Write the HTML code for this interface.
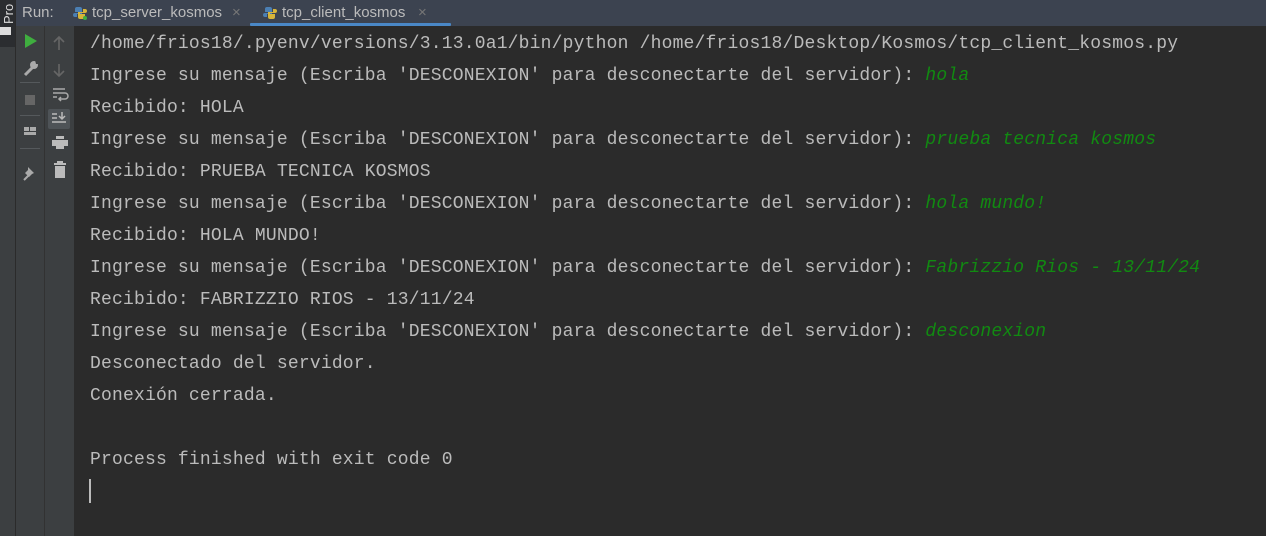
<!DOCTYPE html>
<html><head><meta charset="utf-8"><style>
*{margin:0;padding:0;box-sizing:border-box}
body{width:1266px;height:536px;background:#2b2b2b;position:relative;overflow:hidden;font-family:"Liberation Sans",sans-serif}
.abs{position:absolute}
#strip{left:0;top:0;width:15px;height:536px;background:#3c3f41}
#striptop{left:0;top:0;width:15px;height:47px;background:#2b2d30}
#tabs{left:16px;top:0;width:1250px;height:26px;background:#3c4350;color:#bbbbbb;font-size:15px}
#c1{left:16px;top:26px;width:28px;height:510px;background:#3c3f41}
#c2{left:45px;top:26px;width:29px;height:510px;background:#3c3f41}
#sep{left:44px;top:26px;width:1px;height:510px;background:#323232}
#con{left:90px;top:28px;font-family:"Liberation Mono",monospace;font-size:18px;letter-spacing:0.19px;line-height:32px;color:#bbbbbb;white-space:pre}
.g{color:#118a11;font-style:italic}
</style></head><body>
<div class="abs" id="strip"></div>
<div class="abs" id="striptop"></div>
<div class="abs" style="left:0;top:0;width:15px;height:24px;color:#ddd;font-size:13px;overflow:hidden"><div style="transform:rotate(-90deg);transform-origin:0 0;position:absolute;left:1px;top:24px;">Pro</div></div>
<div class="abs" style="left:0;top:27px;width:11px;height:8px;background:#ddd"></div>
<div class="abs" id="tabs">
<span class="abs" style="left:6px;top:4px">Run:</span>
<svg class="abs" style="left:57px;top:6px" width="14" height="14"><path d="M7 1h-3a2 2 0 0 0-2 2v3h5v1H2a2 2 0 0 0 0 4h2V8h5V3a2 2 0 0 0-2-2z" fill="#4b7fb3"/><path d="M7 13h3a2 2 0 0 0 2-2V8H7V7h5a2 2 0 0 0 0-4h-2v3H5v5a2 2 0 0 0 2 2z" fill="#d6b43a"/><circle cx="12" cy="12" r="2" fill="#3fae3f"/></svg>
<span class="abs" style="left:76px;top:4px">tcp_server_kosmos</span>
<span class="abs" style="left:216px;top:4px;color:#777">×</span>
<svg class="abs" style="left:247px;top:6px" width="14" height="14"><path d="M7 1h-3a2 2 0 0 0-2 2v3h5v1H2a2 2 0 0 0 0 4h2V8h5V3a2 2 0 0 0-2-2z" fill="#4b7fb3"/><path d="M7 13h3a2 2 0 0 0 2-2V8H7V7h5a2 2 0 0 0 0-4h-2v3H5v5a2 2 0 0 0 2 2z" fill="#d6b43a"/></svg>
<span class="abs" style="left:266px;top:4px">tcp_client_kosmos</span>
<span class="abs" style="left:402px;top:4px;color:#777">×</span>
<div class="abs" style="left:234px;top:23px;width:201px;height:3px;background:#4a88c7;border-radius:1px"></div>
</div>
<div class="abs" id="c1"></div><div class="abs" id="sep"></div><div class="abs" id="c2"></div>
<svg class="abs" style="left:16px;top:26px" width="58" height="200">
<path d="M9 8l12 7-12 7z" fill="#3fae3f"/>
<path d="M9 49l8-8" stroke="#aaa" stroke-width="3" fill="none"/>
<circle cx="18" cy="39" r="4" fill="#aaa"/><path d="M19 34l4 4-3 0z" fill="#3c3f41"/>
<rect x="4" y="56" width="20" height="1" fill="#55595c"/>
<rect x="9" y="69" width="10" height="10" fill="#666"/>
<rect x="4" y="89" width="20" height="1" fill="#55595c"/>
<rect x="8" y="101" width="5" height="4" fill="#aaa"/><rect x="14" y="101" width="6" height="4" fill="#aaa"/><rect x="8" y="106" width="12" height="3" fill="#aaa"/>
<rect x="4" y="122" width="20" height="1" fill="#55595c"/>
<path d="M8 154l5-5" stroke="#aaa" stroke-width="2"/><path d="M12 141l6 6-2 1-3 3-4-4 3-3z" fill="#aaa"/>
<path d="M43 24v-12M38 16l5-5 5 5" stroke="#666" stroke-width="1.6" fill="none"/>
<path d="M43 38v12M38 45l5 5 5-5" stroke="#666" stroke-width="1.6" fill="none"/>
<path d="M37 63h12M37 67h12a3 3 0 0 1 0 6h-5M45 71l-2 2 2 2M37 71h4" stroke="#aaa" stroke-width="1.5" fill="none"/>
<rect x="32" y="83" width="22" height="20" rx="2" fill="#4e5357"/>
<path d="M36 88h5M36 92h5M36 96h14M46 86v7M43 90l3 3 3-3" stroke="#bbb" stroke-width="1.5" fill="none"/>
<rect x="40" y="110" width="8" height="3" fill="#bbb"/><rect x="36" y="114" width="16" height="6" fill="#bbb"/><rect x="40" y="119" width="8" height="4" fill="#bbb"/>
<rect x="38" y="137" width="12" height="2" fill="#bbb"/><rect x="41" y="135" width="6" height="2" fill="#bbb"/><rect x="39" y="140" width="10" height="12" fill="#bbb"/>
</svg>
<div class="abs" id="con">/home/frios18/.pyenv/versions/3.13.0a1/bin/python /home/frios18/Desktop/Kosmos/tcp_client_kosmos.py
Ingrese su mensaje (Escriba 'DESCONEXION' para desconectarte del servidor): <span class="g">hola</span>
Recibido: HOLA
Ingrese su mensaje (Escriba 'DESCONEXION' para desconectarte del servidor): <span class="g">prueba tecnica kosmos</span>
Recibido: PRUEBA TECNICA KOSMOS
Ingrese su mensaje (Escriba 'DESCONEXION' para desconectarte del servidor): <span class="g">hola mundo!</span>
Recibido: HOLA MUNDO!
Ingrese su mensaje (Escriba 'DESCONEXION' para desconectarte del servidor): <span class="g">Fabrizzio Rios - 13/11/24</span>
Recibido: FABRIZZIO RIOS - 13/11/24
Ingrese su mensaje (Escriba 'DESCONEXION' para desconectarte del servidor): <span class="g">desconexion</span>
Desconectado del servidor.
Conexión cerrada.

Process finished with exit code 0
</div>
<div class="abs" style="left:89px;top:479px;width:2px;height:24px;background:#bbb"></div>
</body></html>
